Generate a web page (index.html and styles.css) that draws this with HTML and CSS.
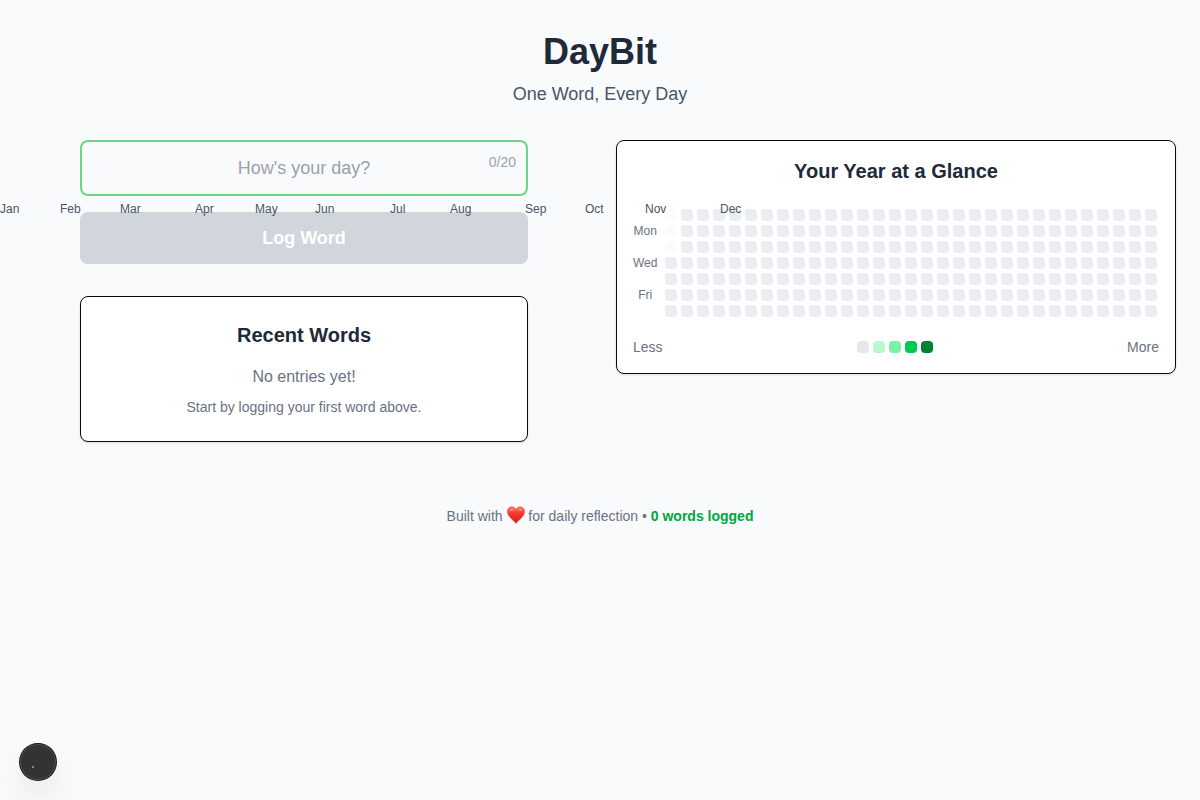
FILE: index.html
```
<!DOCTYPE html>
<html lang="en">
<head>
<meta charset="utf-8">
<meta name="viewport" content="width=device-width, initial-scale=1">
<title>DayBit</title>
<link rel="stylesheet" href="styles.css">
</head>
<body>
<div class="page">
  <header class="header">
    <h1 class="title">DayBit</h1>
    <p class="tagline">One Word, Every Day</p>
  </header>

  <main class="columns">
    <div class="journal">
      <form class="entry">
        <div class="field">
          <input class="word-input" type="text" maxlength="20" placeholder="How's your day?" aria-label="Word of the day">
          <span class="counter">0/20</span>
        </div>
        <button class="log-button" type="submit" disabled>Log Word</button>
      </form>
      <section class="card recent">
        <h2 class="card-title">Recent Words</h2>
        <p class="empty">No entries yet!</p>
        <p class="hint">Start by logging your first word above.</p>
      </section>
    </div>

    <section class="card year">
      <h2 class="card-title">Your Year at a Glance</h2>
      <div class="months" id="months"></div>
      <div class="chart">
        <div class="days">
          <span class="day"></span>
          <span class="day">Mon</span>
          <span class="day"></span>
          <span class="day">Wed</span>
          <span class="day"></span>
          <span class="day">Fri</span>
          <span class="day"></span>
        </div>
        <div class="weeks-view">
          <div class="weeks" id="weeks"></div>
        </div>
      </div>
      <div class="legend">
        <span>Less</span>
        <div class="scale">
          <span class="level level-0"></span>
          <span class="level level-1"></span>
          <span class="level level-2"></span>
          <span class="level level-3"></span>
          <span class="level level-4"></span>
        </div>
        <span>More</span>
      </div>
    </section>
  </main>

  <footer class="footer">
    <p>Built with
      <svg class="heart" viewBox="-1 0 18 18" role="img" aria-label="love">
        <defs>
          <linearGradient id="red" x1="0" y1="0" x2="0" y2="1">
            <stop offset="0" stop-color="#ff6a5c"/>
            <stop offset="0.45" stop-color="#f5352b"/>
            <stop offset="1" stop-color="#cf1d16"/>
          </linearGradient>
          <radialGradient id="shine">
            <stop offset="0" stop-color="#ffc2b8" stop-opacity="0.7"/>
            <stop offset="1" stop-color="#ff8072" stop-opacity="0"/>
          </radialGradient>
        </defs>
        <path fill="url(#red)" stroke="#d63a30" stroke-width="0.4" d="M9 17.5C7.6 14.8 0.4 11 0.4 5.4C0.4 2.7 2.3 0.7 4.8 0.7C6.8 0.7 8.3 1.9 9 3.8C9.7 1.9 11.2 0.7 13.2 0.7C15.7 0.7 17.6 2.7 17.6 5.4C17.6 11 10.4 14.8 9 17.5Z"/>
        <ellipse cx="4.6" cy="3.7" rx="3.2" ry="2.2" fill="url(#shine)"/>
        <ellipse cx="13.2" cy="3.7" rx="3.2" ry="2.2" fill="url(#shine)"/>
      </svg>
      for daily reflection • <strong class="total">0 words logged</strong></p>
  </footer>
</div>

<button class="tools-button" type="button" aria-label="Open tools">
  <svg viewBox="0 0 36 36" aria-hidden="true"><rect x="12" y="22" width="2" height="2" rx="0.5" fill="#8c8c8c"/></svg>
</button>
<script src="script.js"></script>
</body>
</html>
```
FILE: styles.css
```
* {
  box-sizing: border-box;
}

body {
  margin: 0;
  min-height: 100vh;
  background: #f9fafc;
  color: #1e2939;
  font-family: "Liberation Sans", Arial, sans-serif;
  font-size: 16px;
  line-height: 24px;
  overflow-x: hidden;
}

h1,
h2,
p {
  margin: 0;
}

.page {
  max-width: 1280px;
  margin: 0 auto;
  padding: 32px 24px;
}

.header {
  margin-bottom: 32px;
  text-align: center;
}

.title {
  margin-bottom: 8px;
  font-size: 36px;
  line-height: 40px;
}

.tagline {
  color: #4a5565;
  font-size: 18px;
  line-height: 28px;
}

.columns {
  display: grid;
  grid-template-columns: repeat(2, minmax(0, 1fr));
  gap: 32px;
  align-items: start;
}

.journal {
  display: flex;
  flex-direction: column;
  gap: 32px;
  width: 100%;
  max-width: 448px;
  margin: 0 auto;
}

.entry {
  display: flex;
  flex-direction: column;
  gap: 16px;
}

.field {
  position: relative;
}

.word-input {
  display: block;
  width: 100%;
  height: 56px;
  padding: 12px 16px;
  border: 2px solid #6bd683;
  border-radius: 8px;
  outline: none;
  background: transparent;
  color: inherit;
  font: inherit;
  font-size: 18px;
  line-height: 28px;
  text-align: center;
}

.word-input::placeholder {
  color: #99a1af;
}

.counter {
  position: absolute;
  top: 12px;
  right: 12px;
  color: #99a1af;
  font-size: 14px;
  line-height: 20px;
}

.log-button {
  padding: 12px 24px;
  border: 0;
  border-radius: 8px;
  background: #d1d5dc;
  color: #fff;
  font: inherit;
  font-size: 18px;
  font-weight: 700;
  line-height: 28px;
}

.card {
  border: 1px solid #0a0a0a;
  border-radius: 8px;
  background: #fff;
  box-shadow: 0 1px 3px rgb(0 0 0 / 10%), 0 1px 2px -1px rgb(0 0 0 / 10%);
}

.card-title {
  margin-bottom: 16px;
  font-size: 20px;
  line-height: 28px;
  text-align: center;
}

.recent {
  padding: 24px;
  color: #6a7282;
  text-align: center;
}

.recent .card-title {
  color: #1e2939;
}

.hint {
  margin-top: 8px;
  font-size: 14px;
  line-height: 20px;
}

.year {
  padding: 16px;
}

.months {
  height: 8px;
}

/* Month names are offset from the page edge, above the chart. */
.month {
  position: absolute;
  color: #4a5565;
  font-size: 12px;
  line-height: 16px;
}

.chart {
  display: flex;
  gap: 8px;
}

.days {
  display: grid;
  grid-template-rows: repeat(7, 12px);
  gap: 4px;
  width: 24px;
  flex: none;
}

.day {
  display: flex;
  align-items: center;
  justify-content: center;
  color: #6a7282;
  font-size: 12px;
  line-height: 12px;
}

.weeks-view {
  flex: 1;
  min-width: 0;
  overflow: hidden;
}

.weeks {
  display: grid;
  grid-template-rows: repeat(7, 12px);
  grid-auto-columns: 12px;
  grid-auto-flow: column;
  gap: 4px;
}

.cell {
  border-radius: 4px;
  background: #ebecf0;
}

.cell-outside {
  background: #fafbfc;
}

.legend {
  display: flex;
  align-items: center;
  justify-content: space-between;
  margin-top: 20px;
  color: #6a7282;
  font-size: 14px;
  line-height: 20px;
}

.scale {
  display: flex;
  gap: 4px;
}

.level {
  width: 12px;
  height: 12px;
  border-radius: 4px;
}

.level-0 { background: #e5e7eb; }
.level-1 { background: #b9f8cf; }
.level-2 { background: #7bf1a8; }
.level-3 { background: #00c951; }
.level-4 { background: #008236; }

.footer {
  margin-top: 64px;
  color: #6a7282;
  font-size: 14px;
  line-height: 20px;
  text-align: center;
}

.heart {
  width: 18px;
  height: 18px;
  margin: -4px 0;
  overflow: visible;
  vertical-align: 1px;
}

.total {
  color: #00a63e;
}

.tools-button {
  position: fixed;
  bottom: 20px;
  left: 20px;
  width: 36px;
  height: 36px;
  padding: 0;
  border: 0;
  border-radius: 50%;
  background: #333;
  box-shadow: 0 0 0 1px #171717, inset 0 0 0 1px rgb(255 255 255 / 14%), 0 16px 32px -8px rgb(0 0 0 / 24%);
}

.tools-button svg {
  display: block;
}
```
FILE: script.js
```
const MONTHS = [
  ["Jan", 0], ["Feb", 4], ["Mar", 8], ["Apr", 13], ["May", 17], ["Jun", 21],
  ["Jul", 26], ["Aug", 30], ["Sep", 35], ["Oct", 39], ["Nov", 43], ["Dec", 48],
];
const WEEK_STEP = 15;
const WEEKS = 53;
const DAYS_BEFORE_YEAR = 3;

const months = document.getElementById("months");
for (const [name, week] of MONTHS) {
  const label = document.createElement("span");
  label.className = "month";
  label.style.left = `${week * WEEK_STEP}px`;
  label.textContent = name;
  months.append(label);
}

const weeks = document.getElementById("weeks");
for (let day = 0; day < WEEKS * 7; day++) {
  const cell = document.createElement("span");
  cell.className = day < DAYS_BEFORE_YEAR ? "cell cell-outside" : "cell";
  weeks.append(cell);
}
```
